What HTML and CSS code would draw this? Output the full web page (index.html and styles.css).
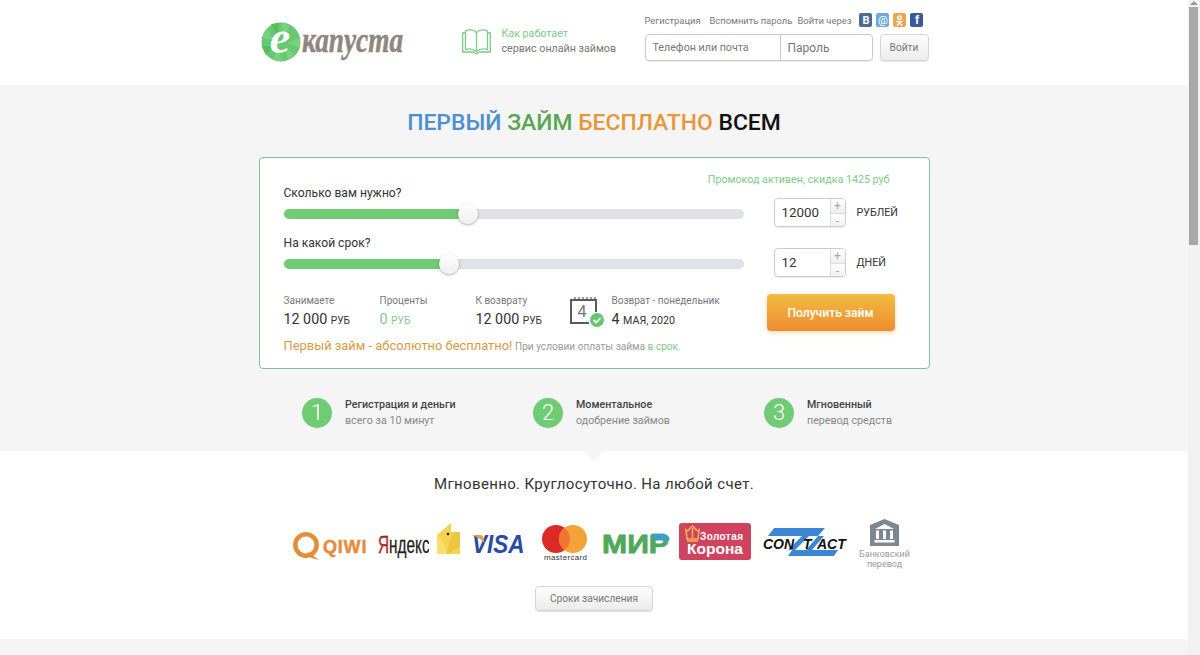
FILE: index.html
```html
<!DOCTYPE html>
<html lang="ru">
<head>
    <meta charset="UTF-8">
    <title>еКапуста</title>
    <link rel="stylesheet" href="styles.css">
</head>
<body>
<div class="page">
    <header class="header">
        <div class="wrap header-in">
            <a class="logo">
                <svg width="145" height="64" viewBox="0 -10 145 64">
                    <circle cx="22" cy="22" r="19.500" fill="#66c870"/>
                    <path d="M22 2.500 31 6 25 17ZM41 18 41 28 28 23ZM8 8 3 18 15 20ZM14 40 22 41.500 20 27ZM36 35 29 40 26 27Z" fill="#78d080"/>
                    <path d="M3 26 7 35 15 26ZM12 4 20 3 18 15Z" fill="#5abd64"/>
                    <text class="logo-e" x="21" y="33" text-anchor="middle">e</text>
                    <text class="logo-word" transform="translate(43 32) scale(.78 1)">капуста</text>
                </svg>
            </a>
            <a class="how">
                <svg width="29" height="27" viewBox="0 0 29 27" fill="none" stroke="#7ccb86" stroke-width="1.300">
                    <path d="M3.500 3V21.500C7 20.500 11.500 21 14.500 23.500C17.500 21 22 20.500 25.500 21.500V3C22 1.500 17.500 1.500 14.500 4.500C11.500 1.500 7 1.500 3.500 3Z"/>
                    <path d="M14.500 4.500V23.500"/>
                    <path d="M3.500 5H.7V24H11.500L14.500 26 17.500 24H28.300V5H25.500"/>
                </svg>
                <span class="how-text">
                    <span class="how-top">Как работает</span>
                    <span class="how-sub">сервис онлайн займов</span>
                </span>
            </a>
            <div class="login">
                <div class="login-links">
                    <a>Регистрация</a>
                    <a>Вспомнить пароль</a>
                    <span>Войти через</span>
                    <span class="socials">
                        <i class="soc soc-vk">В</i>
                        <i class="soc soc-mail">@</i>
                        <i class="soc soc-ok">
                            <svg width="9" height="11" viewBox="0 0 9 11" fill="none" stroke="#fff" stroke-width="1.400">
                                <circle cx="4.500" cy="2.800" r="1.800"/>
                                <path d="M1.500 6C3.200 7.200 5.800 7.200 7.500 6M4.500 7V8M1.800 10.600 4.500 8 7.200 10.600"/>
                            </svg>
                        </i>
                        <i class="soc soc-fb">f</i>
                    </span>
                </div>
                <div class="login-form">
                    <div class="login-fields">
                        <span class="field field-phone">Телефон или почта</span>
                        <span class="field field-pass">Пароль</span>
                    </div>
                    <a class="btn btn-login">Войти</a>
                </div>
            </div>
        </div>
    </header>

    <section class="hero">
        <h1 class="title"><span class="c-blue">ПЕРВЫЙ</span> <span class="c-green">ЗАЙМ</span> <span class="c-orange">БЕСПЛАТНО</span> ВСЕМ</h1>

        <div class="wrap card">
            <div class="promo">Промокод активен, скидка 1425 руб</div>

            <div class="calc-row">
                <div class="slider-box">
                    <div class="calc-label">Сколько вам нужно?</div>
                    <div class="track">
                        <div class="track-fill" style="width: 184px"></div>
                        <div class="knob" style="left: 184px"></div>
                    </div>
                </div>
                <div class="amount">
                    <div class="spin">
                        <span class="spin-val">12000</span>
                        <span class="spin-btns"><b>+</b><b>-</b></span>
                    </div>
                    <span class="unit">РУБЛЕЙ</span>
                </div>
            </div>

            <div class="calc-row">
                <div class="slider-box">
                    <div class="calc-label">На какой срок?</div>
                    <div class="track">
                        <div class="track-fill" style="width: 165px"></div>
                        <div class="knob" style="left: 165px"></div>
                    </div>
                </div>
                <div class="amount">
                    <div class="spin">
                        <span class="spin-val">12</span>
                        <span class="spin-btns"><b>+</b><b>-</b></span>
                    </div>
                    <span class="unit">ДНЕЙ</span>
                </div>
            </div>

            <div class="stats">
                <div class="stat">
                    <div class="stat-label">Занимаете</div>
                    <div class="stat-val">12 000 <small>РУБ</small></div>
                </div>
                <div class="stat">
                    <div class="stat-label">Проценты</div>
                    <div class="stat-val c-free">0 <small>РУБ</small></div>
                </div>
                <div class="stat stat-back">
                    <div class="stat-label">К возврату</div>
                    <div class="stat-val">12 000 <small>РУБ</small></div>
                </div>
                <svg class="cal" width="36" height="34" viewBox="0 0 36 34" fill="none">
                    <path d="M20 27H2V4H27V16" stroke="#5a5a5a" stroke-width="2"/>
                    <path d="M6 1V5M10 1V5M14 1V5M18 1V5M22 1V5M26 1V5" stroke="#5a5a5a" stroke-width="1.200"/>
                    <text class="cal-num" x="13" y="21" text-anchor="middle">4</text>
                    <circle cx="28" cy="24" r="7" fill="#67c46f"/>
                    <path d="M24.500 24 27.200 26.500 31.500 22" stroke="#fff" stroke-width="1.800"/>
                </svg>
                <div class="stat stat-date">
                    <div class="stat-label">Возврат - понедельник</div>
                    <div class="stat-val">4 <small class="date-rest">МАЯ, 2020</small></div>
                </div>
                <a class="btn-get">Получить займ</a>
            </div>

            <div class="note"><span class="note-main">Первый займ - абсолютно бесплатно!</span> При условии оплаты займа <span class="c-free">в срок.</span></div>
        </div>

        <div class="steps">
            <div class="step">
                <span class="step-num">1</span>
                <div>
                    <div class="step-title">Регистрация и деньги</div>
                    <div class="step-sub">всего за 10 минут</div>
                </div>
            </div>
            <div class="step">
                <span class="step-num">2</span>
                <div>
                    <div class="step-title">Моментальное</div>
                    <div class="step-sub">одобрение займов</div>
                </div>
            </div>
            <div class="step">
                <span class="step-num">3</span>
                <div>
                    <div class="step-title">Мгновенный</div>
                    <div class="step-sub">перевод средств</div>
                </div>
            </div>
        </div>
    </section>

    <section class="pay">
        <div class="notch"></div>
        <h2 class="pay-title">Мгновенно. Круглосуточно. На любой счет.</h2>
        <div class="wrap pay-logos">
            <svg width="74" height="52" viewBox="0 0 74 52">
                <circle cx="13" cy="26" r="10.700" fill="none" stroke="#e38e3d" stroke-width="4.500"/>
                <path d="M15 33C18 35 22 38 26 41C21 40 16 38 13 36Z" fill="#e38e3d"/>
                <text class="qiwi" x="30" y="34">QIWI</text>
            </svg>
            <svg class="logo-yandex" width="51" height="52" viewBox="0 0 51 52">
                <text class="yandex" transform="translate(0 34) scale(.64 1)"><tspan fill="#d8262c">Я</tspan>ндекс</text>
            </svg>
            <svg class="logo-wallet" width="23" height="52" viewBox="0 0 23 52">
                <path d="M0 16 14 4V13H23V35H0Z" fill="#f4d351"/>
                <path d="M0 16C4 19 8 24 10 35H0Z" fill="#f7dc6e"/>
                <path d="M10 35 23 27V13H17C14 20 11 26 10 35Z" fill="#ecc63f"/>
                <circle cx="11" cy="15" r="1.300" fill="#222"/>
            </svg>
            <svg class="logo-visa" width="53" height="52" viewBox="0 0 53 52">
                <text class="visa" transform="translate(0 34) scale(.9 1)">VISA</text>
                <path d="M0 16H8C10 16 11 17 11.500 19L12.500 24C9 20 5 18 0 16Z" fill="#e5a04c"/>
            </svg>
            <svg class="logo-mc" width="46" height="52" viewBox="0 0 46 52">
                <circle cx="14" cy="20" r="14" fill="#dc2a28"/>
                <circle cx="31" cy="20" r="14" fill="#f2a43a"/>
                <path d="M22.500 8.900A14 14 0 0 1 22.500 31.100A14 14 0 0 1 22.500 8.900Z" fill="#f0752e"/>
                <text class="mc" x="2" y="41" textLength="43">mastercard</text>
            </svg>
            <svg class="logo-mir" width="68" height="52" viewBox="0 0 68 52">
                <text class="mir" x="0" y="34" textLength="67" lengthAdjust="spacingAndGlyphs">МИР</text>
                <path d="M50 14.500H60C64 14.500 67.500 17 67.500 20V21.500H54C52 21.500 50.500 18 50 14.500Z" fill="#3d9fc4"/>
            </svg>
            <svg class="logo-korona" width="72" height="52" viewBox="0 0 72 52">
                <rect x="0" y="4" width="72" height="37" rx="3" fill="#cf4360"/>
                <path d="M7 11C9 13 10 10 13.500 7C17 10 18 13 20 11L19 20H8Z" fill="none" stroke="#f4b54c" stroke-width="1.600"/>
                <path d="M8 22H19M13.500 9V19" stroke="#f4b54c" stroke-width="1.500"/>
                <text class="kor-top" x="21" y="21" textLength="43">Золотая</text>
                <text class="kor-main" x="8" y="35" textLength="56" lengthAdjust="spacingAndGlyphs">Корона</text>
            </svg>
            <svg class="logo-contact" width="86" height="52" viewBox="0 0 86 52">
                <path d="M12 9H63L56 17H6Z" fill="#3b87d6"/>
                <path d="M30 31H76L72 37H26Z" fill="#3b87d6"/>
                <path d="M40 17H47L33 31H26Z" fill="#3b87d6"/>
                <path d="M56 17H62L50 31H44Z" fill="#3b87d6"/>
                <text class="contact" x="1" y="30">CON</text>
                <text class="contact" x="41" y="30">T</text>
                <text class="contact" x="55" y="30">ACT</text>
            </svg>
            <svg class="logo-bank" width="51" height="52" viewBox="0 0 51 52">
                <path d="M25.500 0 40 6V27H11V6Z" fill="#7d8791"/>
                <path d="M25.500 5 35 10H16ZM17 11.500H20V20H17ZM24 11.500H27V20H24ZM31 11.500H34V20H31ZM15.500 21H35.500V23.500H15.500Z" fill="#fff"/>
                <text class="bank" x="25.500" y="38" text-anchor="middle">Банковский</text>
                <text class="bank" x="25.500" y="48" text-anchor="middle">перевод</text>
            </svg>
        </div>
        <a class="btn btn-terms">Сроки зачисления</a>
    </section>

    <footer class="footer"></footer>
</div>

<div class="scrollbar">
    <span class="scroll-arrow"></span>
    <span class="scroll-thumb"></span>
</div>
</body>
</html>
```

FILE: styles.css
```css
html, body {
    margin: 0;
    height: 655px;
    overflow: hidden;
}
body {
    font-family: Roboto, "Noto Sans", sans-serif;
    background-color: #fff;
    color: #333;
}
a {
    color: inherit;
    text-decoration: none;
}
.page {
    width: 1188px;
}
.wrap {
    width: 671px;
    margin: 0 auto;
    box-sizing: border-box;
}

/* header */
.header {
    height: 85px;
    background-color: #fff;
}
.header-in {
    display: flex;
}
.logo {
    width: 203px;
    padding-top: 10px;
    box-sizing: border-box;
}
.logo svg {
    display: block;
}
.logo-e {
    font-family: "Liberation Serif", serif;
    font-style: italic;
    font-weight: bold;
    font-size: 46px;
    fill: #fff;
}
.logo-word {
    font-family: "Liberation Serif", serif;
    font-style: italic;
    font-weight: bold;
    font-size: 35px;
    fill: #8f8681;
    stroke: #8f8681;
    stroke-width: 0.5px;
}
.how {
    width: 183px;
    display: flex;
    gap: 11px;
    padding-top: 26px;
    box-sizing: border-box;
}
.how svg {
    margin-top: 2px;
}
.how-text {
    display: flex;
    flex-direction: column;
    font-size: 10.700px;
    line-height: 15px;
}
.how-top {
    color: #7ccb86;
}
.how-sub {
    color: #777;
}
.login {
    width: 285px;
    padding-top: 13px;
    box-sizing: border-box;
}
.login-links {
    display: flex;
    height: 14px;
    align-items: center;
    font-size: 9.400px;
    color: #777;
    white-space: nowrap;
}
.login-links a:first-child {
    width: 65px;
}
.login-links a:nth-child(2) {
    width: 88px;
}
.socials {
    display: flex;
    gap: 4px;
    margin-left: 8px;
}
.soc {
    width: 13px;
    height: 14px;
    border-radius: 2px;
    display: flex;
    align-items: center;
    justify-content: center;
    font-style: normal;
    font-weight: bold;
    font-size: 11px;
    color: #fff;
}
.soc-vk { background-color: #4d6a92; }
.soc-mail { background-color: #6fa8dc; font-weight: normal; }
.soc-ok { background-color: #eda64d; }
.soc-fb { background-color: #3b5998; font-family: "Liberation Sans", sans-serif; font-size: 12px; }
.login-form {
    display: flex;
    gap: 7px;
    margin-top: 7px;
}
.login-fields {
    display: flex;
    width: 228px;
    height: 27px;
    box-sizing: border-box;
    border: 1px solid #c9c9c9;
    border-radius: 4px;
    box-shadow: 0 1px 1px rgba(0, 0, 0, 0.08);
}
.field {
    display: flex;
    align-items: center;
    color: #777;
    padding-left: 7px;
}
.field-phone {
    width: 135px;
    box-sizing: border-box;
    border-right: 1px solid #c9c9c9;
    font-size: 10.700px;
}
.field-pass {
    font-size: 12px;
}
.btn {
    display: flex;
    align-items: center;
    justify-content: center;
    box-sizing: border-box;
    border: 1px solid #d5d5d5;
    border-radius: 4px;
    background: linear-gradient(#fdfdfd, #ececec);
    box-shadow: 0 1px 1px rgba(0, 0, 0, 0.12);
    color: #777;
    font-size: 10.200px;
}
.btn-login {
    width: 49px;
    height: 27px;
}

/* calculator */
.hero {
    background-color: #f5f5f5;
    padding: 23px 0 22px;
}
.title {
    margin: 0;
    text-align: center;
    font-size: 22.900px;
    line-height: 30px;
    font-weight: 500;
    color: #111;
}
.c-blue { color: #4a90d2; }
.c-green { color: #5aa653; }
.c-orange { color: #e9963b; }
.card {
    margin-top: 19px;
    height: 212px;
    padding: 16px 0 0 24px;
    background-color: #fff;
    border: 1px solid #84c193;
    border-radius: 4px;
}
.promo {
    height: 11px;
    line-height: 12px;
    padding-right: 39px;
    text-align: right;
    font-size: 10.700px;
    color: #7fc98a;
}
.calc-row {
    display: flex;
    gap: 30px;
    height: 50px;
}
.slider-box {
    width: 460px;
}
.calc-label {
    height: 16px;
    line-height: 16px;
    font-size: 12.100px;
    color: #333;
}
.track {
    position: relative;
    height: 10px;
    margin-top: 8px;
    border-radius: 5px;
    background-color: #dfe3e8;
}
.track-fill {
    height: 10px;
    border-radius: 5px;
    background-color: #6fcb74;
}
.knob {
    position: absolute;
    top: -5px;
    width: 20px;
    height: 20px;
    margin-left: -10px;
    border-radius: 50%;
    background: linear-gradient(#fff, #eee);
    box-shadow: 0 1px 3px rgba(0, 0, 0, 0.35);
}
.amount {
    display: flex;
    align-items: center;
    gap: 11px;
    height: 29px;
    margin-top: 13px;
}
.spin {
    display: flex;
    width: 72px;
    height: 29px;
    box-sizing: border-box;
    border: 1px solid #ccc;
    border-radius: 4px;
    box-shadow: 0 1px 1px rgba(0, 0, 0, 0.08);
    overflow: hidden;
}
.spin-val {
    flex: 1;
    padding-left: 7px;
    line-height: 27px;
    font-size: 13.300px;
    color: #333;
}
.spin-btns {
    display: flex;
    flex-direction: column;
    width: 14px;
    border-left: 1px solid #ddd;
}
.spin-btns b {
    flex: 1;
    display: flex;
    align-items: center;
    justify-content: center;
    font-weight: normal;
    font-size: 12px;
    color: #aaa;
    background: linear-gradient(#fff, #eee);
    border-bottom: 1px solid #ddd;
}
.unit {
    font-size: 10.700px;
    color: #333;
}
.stats {
    display: flex;
    margin-top: 9px;
    height: 37px;
}
.stat {
    width: 96px;
}
.stat-back {
    width: 93px;
}
.stat-label {
    height: 14px;
    line-height: 14px;
    font-size: 10px;
    color: #777;
}
.stat-val {
    margin-top: 1px;
    line-height: 20px;
    font-size: 14.300px;
    color: #333;
}
.stat-val small {
    font-size: 10.200px;
}
.stat-val .date-rest {
    font-size: 10.700px;
}
.c-free {
    color: #7fc98a;
}
.cal {
    margin-top: 2px;
    margin-right: 7px;
}
.cal-num {
    font-family: Roboto, sans-serif;
    font-size: 16px;
    fill: #777;
}
.stat-date {
    width: 155px;
}
.btn-get {
    display: flex;
    align-items: center;
    justify-content: center;
    width: 128px;
    height: 37px;
    border-radius: 4px;
    background: linear-gradient(#f4bb42, #ee8c2f);
    box-shadow: 0 2px 5px rgba(238, 150, 50, 0.35);
    color: #fff;
    font-size: 12.100px;
    font-weight: 500;
}
.note {
    margin-top: 7px;
    line-height: 16px;
    font-size: 10.100px;
    color: #999;
}
.note-main {
    font-size: 12.900px;
    color: #d69a45;
}
.steps {
    display: flex;
    width: 693px;
    margin: 29px 0 0 302px;
}
.step {
    width: 231px;
    display: flex;
    gap: 13px;
}
.step-num {
    width: 30px;
    height: 30px;
    border-radius: 50%;
    background-color: #6fcb74;
    color: #fff;
    font-size: 22px;
    font-weight: 300;
    line-height: 30px;
    text-align: center;
}
.step-title {
    font-size: 10.700px;
    font-weight: 500;
    line-height: 16px;
    margin-top: -1px;
    color: #444;
}
.step-sub {
    font-size: 10.700px;
    line-height: 16px;
    color: #888;
}

/* payment methods */
.pay {
    position: relative;
    height: 188px;
    padding-top: 23px;
    box-sizing: border-box;
    background-color: #fff;
}
.notch {
    position: absolute;
    top: 0;
    left: 584px;
    width: 0;
    height: 0;
    border-left: 10px solid transparent;
    border-right: 10px solid transparent;
    border-top: 10px solid #f5f5f5;
}
.pay-title {
    margin: 0;
    text-align: center;
    font-size: 15px;
    font-weight: 400;
    line-height: 20px;
    letter-spacing: 0.35px;
    color: #333;
}
.pay-logos {
    display: flex;
    height: 52px;
    margin-top: 25px;
    padding-left: 34px;
}
.pay-logos svg {
    flex-shrink: 0;
}
.logo-yandex { margin-left: 11px; }
.logo-wallet { margin-left: 8px; }
.logo-visa { margin-left: 12px; }
.logo-mc { margin-left: 17px; }
.logo-mir { margin-left: 14px; }
.logo-korona { margin-left: 9px; }
.logo-contact { margin-left: 11px; }
.logo-bank { margin-left: 11px; }
.qiwi {
    font-family: "Liberation Sans", sans-serif;
    font-weight: bold;
    font-size: 18px;
    letter-spacing: 0.8px;
    fill: #e38e3d;
    stroke: #e38e3d;
    stroke-width: 0.5px;
}
.yandex {
    font-family: "Liberation Sans", sans-serif;
    font-size: 24px;
    fill: #222;
    stroke: #222;
    stroke-width: 0.3px;
}
.visa {
    font-family: "Liberation Sans", sans-serif;
    font-weight: bold;
    font-style: italic;
    font-size: 25px;
    fill: #2b4aa8;
}
.mc {
    font-family: "Liberation Sans", sans-serif;
    font-size: 8px;
    fill: #333;
}
.mir {
    font-family: "Liberation Sans", sans-serif;
    font-weight: bold;
    font-size: 26px;
    fill: #4fa85b;
    stroke: #4fa85b;
    stroke-width: 0.8px;
}
.kor-top {
    font-family: "Liberation Sans", sans-serif;
    font-size: 10px;
    font-weight: bold;
    fill: #fff;
}
.kor-main {
    font-family: "Liberation Sans", sans-serif;
    font-size: 15px;
    font-weight: bold;
    fill: #fff;
}
.contact {
    font-family: "Liberation Sans", sans-serif;
    font-size: 14px;
    font-weight: bold;
    font-style: italic;
    fill: #111;
}
.bank {
    font-family: Roboto, sans-serif;
    font-size: 9px;
    fill: #999;
}
.btn-terms {
    width: 118px;
    height: 25px;
    margin: 15px 0 0 535px;
}
.footer {
    height: 16px;
    background-color: #f5f5f5;
}

/* page scrollbar */
.scrollbar {
    position: fixed;
    top: 0;
    right: 0;
    width: 12px;
    height: 655px;
    background-color: #f1f1f1;
}
.scroll-arrow {
    position: absolute;
    top: 1px;
    left: 2px;
    border-left: 4px solid transparent;
    border-right: 4px solid transparent;
    border-bottom: 4px solid #999;
}
.scroll-thumb {
    position: absolute;
    top: 7px;
    left: 1px;
    width: 9px;
    height: 238px;
    background-color: #a8a8a8;
}
```
